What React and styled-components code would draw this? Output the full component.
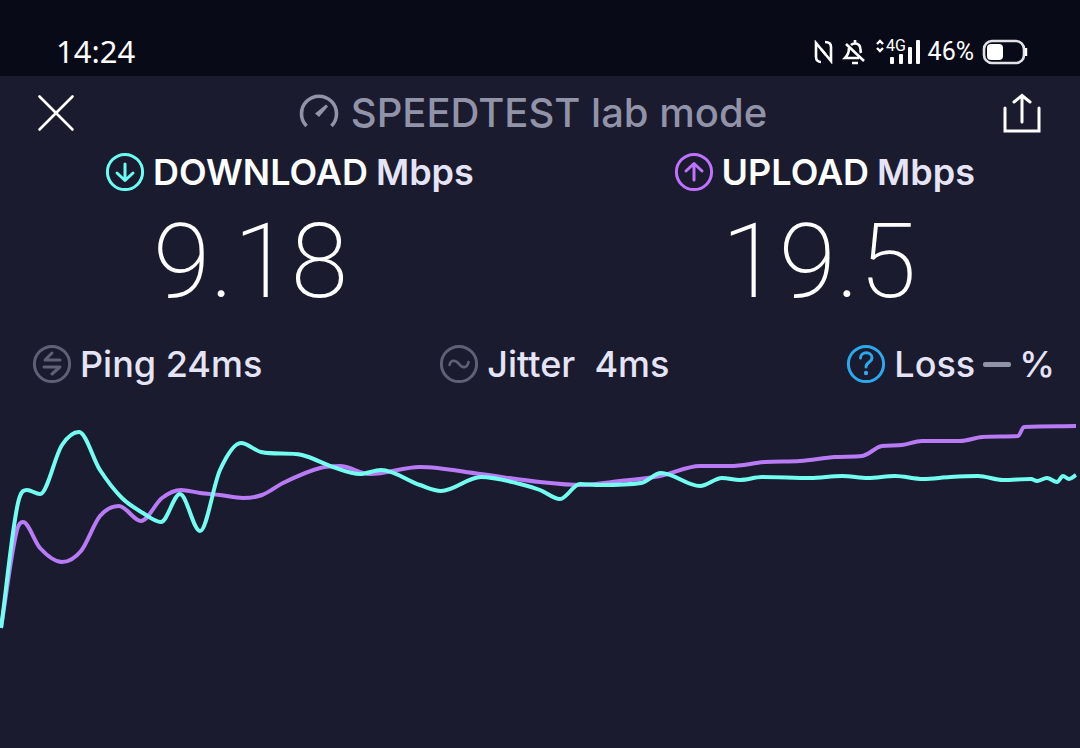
import React from 'react';
import styled, { createGlobalStyle } from 'styled-components';

const GlobalStyle = createGlobalStyle`
	* {
		box-sizing: border-box;
	}

	body {
		margin: 0;
		background: #1a1b2e;
		color: #ffffff;
		font-family: Inter, 'Liberation Sans', sans-serif;
	}
`;

const Page = styled.div`
	min-height: 100vh;
	display: flex;
	flex-direction: column;
	overflow: hidden;
`;

const StatusBar = styled.div`
	height: 76px;
	padding: 28px 52px 0 56px;
	background: #090a18;
	display: flex;
	justify-content: space-between;
`;

const Clock = styled.time`
	font-family: 'Noto Sans', sans-serif;
	font-size: 31px;
	line-height: 46px;
`;

const StatusIcons = styled.div`
	height: 48px;
	display: flex;
	align-items: center;
	gap: 8px;
`;

const BatteryText = styled.span`
	font-family: Roboto, sans-serif;
	font-size: 25px;
	line-height: 48px;
`;

const Header = styled.header`
	height: 74px;
	padding: 0 38px 0 36px;
	display: flex;
	align-items: center;
	justify-content: space-between;
`;

const IconButton = styled.button`
	width: 40px;
	height: 40px;
	padding: 0;
	border: 0;
	background: none;
	color: inherit;
	cursor: pointer;
`;

const Title = styled.h1`
	margin: 0 12px 0 0;
	display: flex;
	align-items: center;
	gap: 12px;
	color: #9193a8;
	font-size: 40px;
	font-weight: 500;
	line-height: 48px;
`;

const Results = styled.section`
	padding: 0 105px;
	display: flex;
	justify-content: space-between;
`;

const ResultLabel = styled.h2`
	margin: 0;
	height: 44px;
	display: flex;
	align-items: center;
	gap: 8px;
	font-size: 36px;
	font-weight: 600;
	line-height: 44px;
`;

const Unit = styled.span`
	color: #e5e4f7;
	font-weight: 600;
`;

const ResultValue = styled.p`
	margin: 0;
	height: 140px;
	padding-left: 48px;
	font-family: Roboto, sans-serif;
	font-size: 104px;
	font-weight: 200;
	line-height: 136px;
`;

const Stats = styled.section`
	height: 60px;
	padding: 0 25px 0 32px;
	display: flex;
	align-items: center;
	justify-content: space-between;
`;

const Stat = styled.div`
	display: flex;
	align-items: center;
	gap: 8px;
	color: #e5e4f7;
	font-size: 36px;
	font-weight: 500;
	line-height: 44px;
`;

const Dash = styled.span`
	width: 28px;
	height: 5px;
	border-radius: 2px;
	background: #9193a8;
`;

const Chart = styled.svg`
	display: block;
	width: 100%;
	height: auto;
`;

const download = [
	[1, 628], [19, 499], [27, 490], [40, 494], [62, 445], [79, 432], [100, 470],
	[122, 498], [143, 513], [161, 522], [180, 494], [200, 531], [220, 470],
	[241, 443], [261, 452], [302, 455], [333, 467], [360, 474], [381, 470],
	[420, 485], [441, 491], [481, 477], [520, 484], [540, 490], [560, 499],
	[580, 484], [600, 485], [641, 483], [661, 473], [700, 486], [722, 478],
	[740, 480], [762, 477], [810, 478], [842, 476], [868, 478], [895, 476],
	[923, 479], [950, 477], [978, 476], [1003, 480], [1031, 479], [1037, 481],
	[1047, 478], [1057, 482], [1063, 476], [1069, 479], [1076, 475],
];

const upload = [
	[1, 628], [17, 530], [23, 522], [40, 548], [62, 562], [81, 551], [100, 516],
	[119, 506], [141, 521], [162, 498], [181, 490], [200, 493], [220, 495],
	[243, 498], [262, 495], [283, 483], [320, 468], [340, 466], [370, 474],
	[420, 467], [480, 474], [540, 482], [580, 485], [620, 481], [660, 476],
	[700, 466], [730, 466], [765, 462], [800, 461], [835, 457], [862, 456],
	[882, 446], [902, 445], [922, 441], [960, 441], [982, 437], [1018, 436],
	[1024, 427], [1076, 426],
];

// monotone cubic, so the line never overshoots a sample
function toPath(points) {
	const slopes = points
		.slice(1)
		.map((p, i) => (p[1] - points[i][1]) / (p[0] - points[i][0]));
	const tangents = points.map((p, i) => {
		if (i === 0) return slopes[0];
		if (i === points.length - 1) return slopes[i - 1];
		const a = slopes[i - 1];
		const b = slopes[i];
		if (a * b <= 0) return 0;
		const limit = 3 * Math.min(Math.abs(a), Math.abs(b));
		return Math.sign(a) * Math.min(Math.abs(a + b) / 2, limit);
	});
	return points.slice(1).reduce((path, p, i) => {
		const q = points[i];
		const d = (p[0] - q[0]) / 3;
		return `${path} C${q[0] + d} ${q[1] + d * tangents[i]} ${p[0] - d} ${
			p[1] - d * tangents[i + 1]
		} ${p[0]} ${p[1]}`;
	}, `M${points[0][0]} ${points[0][1]}`);
}

function CircleIcon({ color, children }) {
	return (
		<svg
			width="40"
			height="40"
			viewBox="0 0 40 40"
			fill="none"
			stroke={color}
			strokeWidth="3"
			strokeLinecap="round"
			strokeLinejoin="round"
			aria-hidden="true"
		>
			<circle cx="20" cy="20" r="17.6" />
			{children}
		</svg>
	);
}

function PhoneStatus() {
	return (
		<StatusIcons>
			<svg width="20" height="24" viewBox="0 0 20 24" fill="none" stroke="#fff" strokeWidth="2.6">
				<path d="M7 22C4 22 2 20 2 17V3L12 15" />
				<path d="M11 2C15 2 17 4 17 7V21L7 9" />
			</svg>
			<svg width="24" height="26" viewBox="0 0 24 26" fill="none" stroke="#fff" strokeWidth="2.6">
				<path d="M9 6C11 4 15 4 17 6C19 8 18 11 19 14M7 9C7 14 6 16 3 19H17" />
				<path d="M4 5L22 22M13 1V4M10 24H16" />
			</svg>
			<svg width="46" height="36" viewBox="0 -5 46 36" fill="#fff">
				<path d="M3 5L6 2L9 5M3 9L6 12L9 9" fill="none" stroke="#fff" strokeWidth="2.4" />
				<text x="12" y="12" fontFamily="Roboto, sans-serif" fontSize="16">4G</text>
				<rect x="16" y="18" width="4" height="7" rx="1" />
				<rect x="25" y="15" width="4" height="10" rx="1" />
				<rect x="34" y="8" width="4" height="17" rx="1" />
				<rect x="42" y="1" width="4" height="24" rx="1" />
			</svg>
			<BatteryText>46%</BatteryText>
			<svg width="46" height="26" viewBox="0 0 46 26" fill="none">
				<rect x="2" y="2" width="40" height="22" rx="8" stroke="#e2e2e6" strokeWidth="2.6" />
				<rect x="5" y="5" width="16" height="16" rx="4" fill="#fff" />
				<path d="M44 9V17" stroke="#fff" strokeWidth="2.4" />
			</svg>
		</StatusIcons>
	);
}

function Result({ label, value, color, arrow }) {
	return (
		<div>
			<ResultLabel>
				<CircleIcon color={color}>
					<path d={arrow} />
				</CircleIcon>
				<span>{label}</span>
				<Unit>Mbps</Unit>
			</ResultLabel>
			<ResultValue>{value}</ResultValue>
		</div>
	);
}

function App() {
	return (
		<Page>
			<GlobalStyle />
			<StatusBar>
				<Clock>14:24</Clock>
				<PhoneStatus />
			</StatusBar>
			<Header>
				<IconButton aria-label="Close">
					<svg width="40" height="40" viewBox="0 0 40 40" stroke="#fff" strokeWidth="2.6" strokeLinecap="round">
						<path d="M3.500 3.500L36.500 36.500M36.500 3.500L3.500 36.500" />
					</svg>
				</IconButton>
				<Title>
					<svg width="40" height="40" viewBox="0 0 40 40" fill="none">
						<path d="M7.500 33A17.500 17.500 0 1 1 32.500 33" stroke="#9193a8" strokeWidth="3.6" />
						<path d="M16 20.500L27 11.500L29 13.500L20 24Z" fill="#9193a8" />
					</svg>
					SPEEDTEST lab mode
				</Title>
				<IconButton aria-label="Share">
					<svg width="40" height="40" viewBox="0 0 40 40" fill="none" stroke="#fff" strokeWidth="3" strokeLinecap="round">
						<path d="M3 15V38H37V15M20 29V3M12 9L20 2.500L28 9" />
					</svg>
				</IconButton>
			</Header>
			<Results>
				<Result
					label="DOWNLOAD"
					value="9.18"
					color="#6afff3"
					arrow="M20 12V28M12 21L20 28.500L28 21"
				/>
				<Result
					label="UPLOAD"
					value="19.5"
					color="#bf71ff"
					arrow="M20 28V12M12 19L20 11.500L28 19"
				/>
			</Results>
			<Stats>
				<Stat>
					<CircleIcon color="#5f6076">
						<path d="M28 16H13L20 9M12 23H28L20 30" />
					</CircleIcon>
					<span>Ping 24ms</span>
				</Stat>
				<Stat>
					<CircleIcon color="#5f6076">
						<path d="M10.500 21C12 15 17 16 20 20S28 25 29.500 18" strokeWidth="2.6" />
					</CircleIcon>
					<span>Jitter&nbsp; 4ms</span>
				</Stat>
				<Stat>
					<CircleIcon color="#2ba9ee">
						<path d="M14.500 14C14.500 7 26 7 26 14C26 18 20 18 20 23" />
						<circle cx="20" cy="29" r="2.2" fill="#2ba9ee" stroke="none" />
					</CircleIcon>
					<span>Loss</span>
					<Dash />
					<span>%</span>
				</Stat>
			</Stats>
			<Chart viewBox="0 394 1080 260" fill="none" strokeWidth="4" strokeLinejoin="round" role="img" aria-label="Download and upload speed over time">
				<path d={toPath(upload)} stroke="#b87af5" />
				<path d={toPath(download)} stroke="#72fff1" />
			</Chart>
		</Page>
	);
}

export default App;
